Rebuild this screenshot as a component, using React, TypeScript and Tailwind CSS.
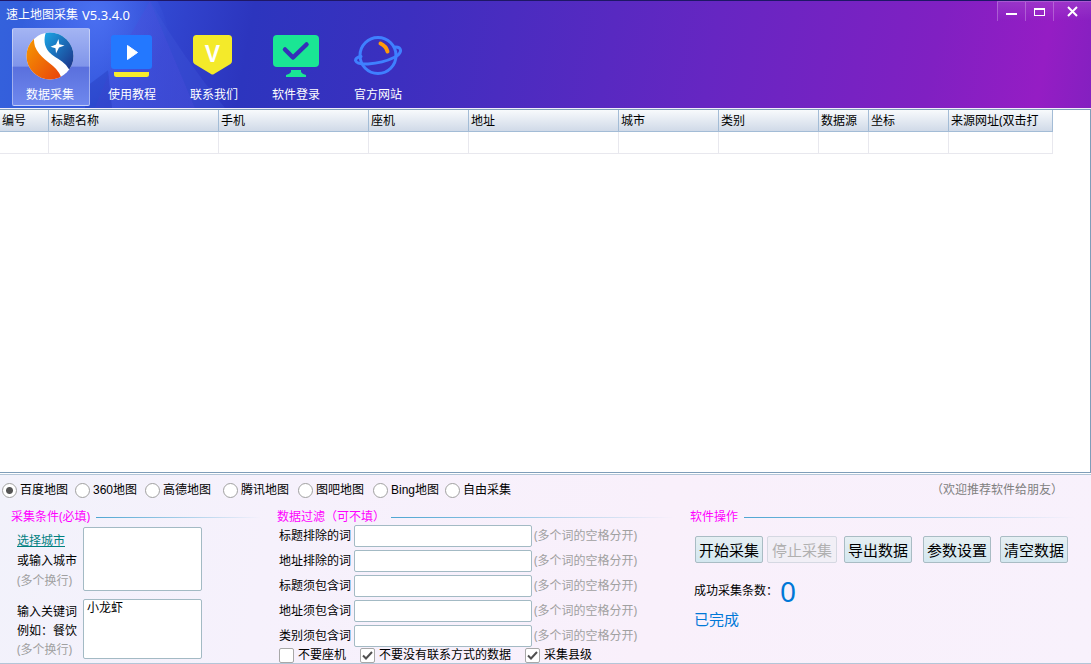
import type { ReactNode } from 'react';

const columns = [
  { title: '编号', width: 'w-[49px]' },
  { title: '标题名称', width: 'w-[170px]' },
  { title: '手机', width: 'w-[150px]' },
  { title: '座机', width: 'w-[100px]' },
  { title: '地址', width: 'w-[150px]' },
  { title: '城市', width: 'w-[100px]' },
  { title: '类别', width: 'w-[100px]' },
  { title: '数据源', width: 'w-[50px]' },
  { title: '坐标', width: 'w-[80px]' },
  { title: '来源网址(双击打', width: 'w-[104px]' },
];

const sources = ['百度地图', '360地图', '高德地图', '腾讯地图', '图吧地图', 'Bing地图', '自由采集'];

const filters = ['标题排除的词', '地址排除的词', '标题须包含词', '地址须包含词', '类别须包含词'];

function LogoIcon() {
  return (
    <svg viewBox="0 0 48 48" className="size-12">
      <defs>
        <linearGradient id="logo-orange" x1="0" y1="0" x2="1" y2="1">
          <stop offset="0" stopColor="#f7a000" />
          <stop offset="1" stopColor="#e8400c" />
        </linearGradient>
        <linearGradient id="logo-blue" x1="0" y1="0" x2="1" y2="1">
          <stop offset="0" stopColor="#1ba6e6" />
          <stop offset="1" stopColor="#1c2f86" />
        </linearGradient>
        <clipPath id="logo-clip">
          <circle cx="24" cy="24" r="23.5" />
        </clipPath>
      </defs>
      <g clipPath="url(#logo-clip)">
        <rect width="48" height="48" fill="#fff" />
        <path d="M9 0Q7 8 9 14.500C11 20 15 24 19 27.500L27 34Q34 40 36 48H0V0Z" fill="url(#logo-orange)" />
        <path d="M20 0C17.500 7 18 14 23 20C27 24 31 26 36 29.500Q41 33 43.500 38L48 36V0Z" fill="url(#logo-blue)" />
        <path d="M32.500 7L33.300 12.300L38.500 13.500L33 15.500L30 21.500L29.500 16.300L24.500 14.800L30 12.500Z" fill="#fff" />
      </g>
    </svg>
  );
}

function TutorialIcon() {
  return (
    <svg viewBox="0 0 48 48" className="size-12">
      <rect x="3" y="3" width="41" height="34" rx="3" fill="#2378ff" />
      <path d="M19.500 13.500V27.500L29.500 20.500Z" fill="#fff" stroke="#fff" strokeWidth="1" strokeLinejoin="round" />
      <path d="M6 40H41V42.500Q41 45 38.500 45H8.500Q6 45 6 42.500Z" fill="#f7ec2c" />
    </svg>
  );
}

function ContactIcon() {
  return (
    <svg viewBox="0 0 48 48" className="size-12">
      <path d="M6.500 3H38.500Q42 3 42 6.500V29Q42 31 40.500 32L24 42Q22.500 43 21 42L4.500 32Q3 31 3 29V6.500Q3 3 6.500 3Z" fill="#f4ea2a" />
      <text x="22.500" y="30" textAnchor="middle" fill="#fff" className="font-['Liberation_Sans',sans-serif] text-[23px] font-bold">V</text>
    </svg>
  );
}

function LoginIcon() {
  return (
    <svg viewBox="0 0 48 48" className="size-12">
      <rect x="1" y="3" width="46" height="32" rx="4" fill="#1ae694" />
      <path d="M13 17.500L21 25.500L34.500 12.500" fill="none" stroke="#352fb9" strokeWidth="4.500" strokeLinecap="round" strokeLinejoin="round" />
      <path d="M19 38H29V40Q30 42 34 43V45H14V43Q18 42 19 40Z" fill="#1ae694" />
    </svg>
  );
}

function WebsiteIcon() {
  return (
    <svg viewBox="0 0 48 48" className="size-12" fill="none" strokeLinecap="round">
      <circle cx="24" cy="23.500" r="18" stroke="#3f80ff" strokeWidth="3" />
      <path d="M7 24.500Q1.500 25.500 1.500 28.500Q3 32.500 14 32Q29 31 40 25.500Q47 22 46.500 18Q46 15 41.500 15" stroke="#3f80ff" strokeWidth="3" />
      <path d="M26.500 11.500Q32 14 33.500 19.500" stroke="#ff9a0a" strokeWidth="4" />
    </svg>
  );
}

const navItems = [
  { label: '数据采集', icon: <LogoIcon />, active: true },
  { label: '使用教程', icon: <TutorialIcon /> },
  { label: '联系我们', icon: <ContactIcon /> },
  { label: '软件登录', icon: <LoginIcon /> },
  { label: '官方网站', icon: <WebsiteIcon /> },
];

function WindowButtons() {
  const base = 'flex h-5 justify-center border-t border-l border-white/25 bg-linear-to-b from-white/10 to-transparent pt-1';
  return (
    <div className="flex">
      <button type="button" aria-label="最小化" className={`${base} w-7`}>
        <svg viewBox="0 0 12 12" className="size-3"><path d="M0 7H11V9H0Z" fill="#fff" /></svg>
      </button>
      <button type="button" aria-label="最大化" className={`${base} w-7`}>
        <svg viewBox="0 0 12 12" className="size-3"><path d="M0 2H11V10H0ZM1 4V9H10V4Z" fill="#fff" fillRule="evenodd" /></svg>
      </button>
      <button type="button" aria-label="关闭" className={`${base} w-[38px]`}>
        <svg viewBox="0 0 12 12" className="size-3"><path d="M1 1L10 10M10 1L1 10" stroke="#fff" strokeWidth="2" /></svg>
      </button>
    </div>
  );
}

function HeaderBackground() {
  return (
    <svg viewBox="0 0 420 108" preserveAspectRatio="none" className="absolute top-0 left-0 -z-10 h-full w-[420px]">
      <defs>
        <radialGradient id="glow" cx="0.5" cy="0.3" r="0.5">
          <stop offset="0" stopColor="#5a80ff" stopOpacity="0.6" />
          <stop offset="1" stopColor="#5a80ff" stopOpacity="0" />
        </radialGradient>
        <linearGradient id="beam" x1="0" y1="0" x2="1" y2="0">
          <stop offset="0" stopColor="#4450dc" stopOpacity="0.5" />
          <stop offset="1" stopColor="#4a52dc" stopOpacity="0.5" />
        </linearGradient>
      </defs>
      <ellipse cx="95" cy="50" rx="75" ry="90" fill="url(#glow)" />
      <path d="M110 70L150 0L195 108H95Z" fill="url(#beam)" />
      <path d="M150 0L195 108H225Q185 60 150 0Z" fill="#4358dc" fillOpacity="0.3" />
      <path d="M88 85L108 70L112 108H85Z" fill="#1d2fae" fillOpacity="0.3" />
    </svg>
  );
}

function Header() {
  return (
    <header className="relative isolate border-t border-b border-t-[#1e1766] border-b-[#f0eefa] bg-[linear-gradient(100deg,#3462dc_0%,#3355dc_10%,#3042cc_17%,#2c35be_23%,#3c2fbf_37%,#6626c2_65%,#8020c2_85%,#951dc4_95%,#8420c0_100%)] text-white">
      <HeaderBackground />
      <div className="flex justify-between">
        <h1 className="flex gap-1 pt-1.5 pl-1.5 leading-4">
          速上地图采集 <span className="text-[13px]">V5.3.4.0</span>
        </h1>
        <WindowButtons />
      </div>
      <nav className="flex gap-1 px-3 pt-[5px] pb-0.5">
        {navItems.map((item) => (
          <button
            key={item.label}
            type="button"
            className={`flex h-[78px] w-[78px] flex-col items-center rounded-xs border pt-[3px] pr-0.5 ${
              item.active
                ? 'border-white/40 bg-[linear-gradient(180deg,#a3b4f3_0%,#8095ea_49%,#5a70dd_50%,#6f88ee_100%)]'
                : 'border-transparent'
            }`}
          >
            {item.icon}
            <span className="mt-[7px] leading-4">{item.label}</span>
          </button>
        ))}
      </nav>
    </header>
  );
}

function ResultTable() {
  return (
    <main className="flex-1 border-t border-r border-b border-[#7f9db9] bg-white">
      <table className="w-[1053px] table-fixed border-separate border-spacing-0">
        <thead>
          <tr>
            {columns.map((col) => (
              <th
                key={col.title}
                className={`h-[22px] overflow-hidden border-r border-b border-[#a3bcd6] bg-linear-to-b from-[#f8fafc] to-[#d0dae8] p-0 pl-0.5 text-left font-normal whitespace-nowrap ${col.width}`}
              >
                {col.title}
              </th>
            ))}
          </tr>
        </thead>
        <tbody>
          <tr>
            {columns.map((col) => (
              <td key={col.title} className="h-[22px] border-r border-b border-[#e8e8ee] p-0" />
            ))}
          </tr>
        </tbody>
      </table>
    </main>
  );
}

function Group({ title, children }: { title: string; children: ReactNode }) {
  return (
    <section>
      <div className="flex items-center gap-1.5 pr-4">
        <h2 className="leading-4 text-[#ff00ff]">{title}</h2>
        <div className="h-px flex-1 bg-linear-to-r from-[#4ea6d2] to-transparent" />
      </div>
      {children}
    </section>
  );
}

function Check({ label, checked }: { label: string; checked?: boolean }) {
  return (
    <label className="flex items-center gap-1">
      <span className="grid">
        <input
          type="checkbox"
          defaultChecked={checked}
          className="peer col-start-1 row-start-1 size-[15px] appearance-none rounded-xs border border-[#a8a8a8] bg-white"
        />
        <svg viewBox="0 0 15 15" className="invisible col-start-1 row-start-1 size-[15px] peer-checked:visible">
          <path d="M3 7.500L6 10.500L12 4" fill="none" stroke="#505050" strokeWidth="2" />
        </svg>
      </span>
      {label}
    </label>
  );
}

const fieldStyle = 'rounded-xs border border-[#a3bac4] bg-white outline-none';
const buttonStyle = 'h-[27px] rounded-xs border text-[15px] leading-5 whitespace-nowrap';

function ConditionGroup() {
  return (
    <Group title="采集条件(必填)">
      <div className="flex pt-0.5 pl-1.5">
        <div className="w-[66px] pt-1 leading-5">
          <a href="#city" className="block text-[#008080] underline">选择城市</a>
          <label htmlFor="city" className="block">或输入城市</label>
          <p className="text-[#a0a0a0]">(多个换行)</p>
        </div>
        <textarea id="city" className={`h-16 w-[119px] resize-none px-[3px] ${fieldStyle}`} />
      </div>
      <div className="flex pt-2 pl-1.5">
        <div className="w-[66px] pt-[3px] leading-[19px]">
          <label htmlFor="keyword" className="block">
            输入关键词
            <br />
            例如：餐饮
          </label>
          <p className="text-[#a0a0a0]">(多个换行)</p>
        </div>
        <textarea
          id="keyword"
          defaultValue="小龙虾"
          className={`h-[60px] w-[119px] resize-none px-[3px] leading-4 ${fieldStyle}`}
        />
      </div>
    </Group>
  );
}

function FilterGroup() {
  return (
    <Group title="数据过滤（可不填）">
      <div className="flex flex-col gap-[3px]">
        {filters.map((name) => (
          <div key={name} className="flex items-center">
            <label htmlFor={name} className="w-[77px] pl-0.5">{name}</label>
            <input id={name} type="text" className={`h-[22px] w-[178px] px-1 ${fieldStyle}`} />
            <span className="pl-0.5 text-[#a0a0a0]">(多个词的空格分开)</span>
          </div>
        ))}
      </div>
      <div className="flex gap-3.5 pl-0.5">
        <Check label="不要座机" />
        <Check label="不要没有联系方式的数据" checked />
        <Check label="采集县级" checked />
      </div>
    </Group>
  );
}

function ActionGroup() {
  const enabled = 'w-[68px] border-[#a9bcc4] bg-linear-to-b from-[#e6eff3] to-[#d3e7ef]';
  return (
    <Group title="软件操作">
      <div className="grid grid-cols-[72px_77px_79px_77px_68px] pt-[11px] pl-[5px]">
        <button type="button" className={`${buttonStyle} ${enabled}`}>开始采集</button>
        <button type="button" disabled className={`${buttonStyle} w-[70px] border-[#d5d8e2] bg-[#f1eff6] text-[#b0b0b0]`}>停止采集</button>
        <button type="button" className={`${buttonStyle} ${enabled}`}>导出数据</button>
        <button type="button" className={`${buttonStyle} ${enabled}`}>参数设置</button>
        <button type="button" className={`${buttonStyle} ${enabled}`}>清空数据</button>
      </div>
      <p className="flex items-center gap-0.5 pt-3 pl-1 leading-8">
        成功采集条数：
        <span className="text-[28px] text-[#0078d7]">0</span>
      </p>
      <p className="pl-1 text-[15px] leading-6 text-[#0078d7]">已完成</p>
    </Group>
  );
}

export default function App() {
  return (
    <div className="flex min-h-screen flex-col bg-white font-['Noto_Sans','Noto_Sans_CJK_SC',sans-serif] text-xs text-black">
      <Header />
      <ResultTable />
      <footer className="mt-px border-t border-b border-[#b3c6d8] bg-[linear-gradient(100deg,#f2f2fb_0%,#f6f1fc_25%,#f9f0fb_60%,#f8f1fc_100%)]">
        <div className="flex items-center justify-between pt-[7px] pr-7 pl-0.5">
          <div className="grid grid-cols-[73px_70px_78px_75px_75px_72px_auto] font-['Liberation_Sans','Noto_Sans_CJK_SC',sans-serif]">
            {sources.map((name, i) => (
              <label key={name} className="flex items-center gap-[3px] whitespace-nowrap">
                <input
                  type="radio"
                  name="source"
                  defaultChecked={i === 0}
                  className="size-[15px] appearance-none rounded-full border border-[#a0a0a0] bg-white checked:bg-[radial-gradient(circle,#555_0_3px,#fff_4px)]"
                />
                {name}
              </label>
            ))}
          </div>
          <span className="text-[#808080]">（欢迎推荐软件给朋友）</span>
        </div>
        <div className="grid grid-cols-[266fr_413fr_401fr] pt-[11px] pl-[11px]">
          <ConditionGroup />
          <FilterGroup />
          <ActionGroup />
        </div>
      </footer>
    </div>
  );
}
